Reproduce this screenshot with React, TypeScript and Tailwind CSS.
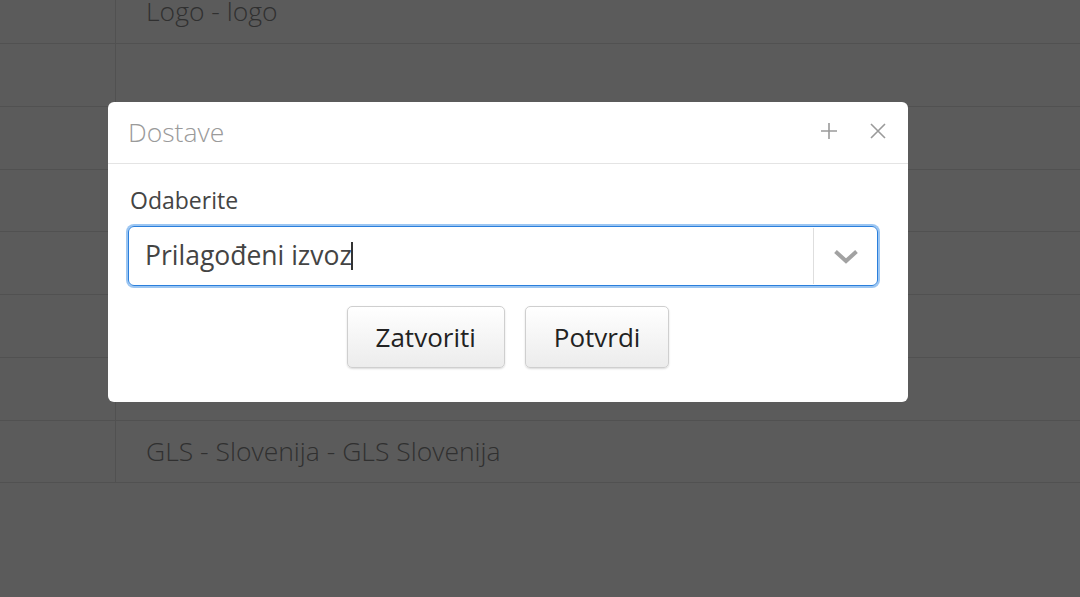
import React from "react";

const rows = ["Logo - logo", "", "", "", "", "", "", "GLS - Slovenija - GLS Slovenija"];

export default function App() {
  return (
    <div
      className="relative w-[1080px] h-[597px] overflow-hidden bg-white"
      style={{ fontFamily: '"Open Sans", "Noto Sans", sans-serif' }}
    >
      <div className="-mt-[18.7px]">
        {rows.map((r, i) => (
          <div key={i} className="flex h-[62.75px] border-b border-[#e2e2e2]">
            <div className="w-[116px] border-r border-[#e2e2e2]" />
            <div className="flex items-center pl-[30px] text-[26.5px] font-light text-[#888] whitespace-nowrap">{r}</div>
          </div>
        ))}
      </div>

      <div className="absolute inset-0 bg-black/[0.645]" />

      <div className="absolute left-[108px] top-[102px] w-[800px] h-[300px] rounded-[6px] bg-white flex flex-col">
        <div className="h-[62px] border-b border-[#e4e4e4] flex items-center pl-[20px] pr-[21px]">
          <span className="text-[26.5px] font-light text-[#9a9a9a] leading-none">Dostave</span>
          <div className="ml-auto flex items-center gap-[31px] -mt-[4px]">
            <svg width="18" height="18" viewBox="0 0 18 18" className="block">
              <path d="M9 1v16M1 9h16" stroke="#9a9a9a" strokeWidth="1.6" fill="none" />
            </svg>
            <svg width="18" height="18" viewBox="0 0 18 18" className="block">
              <path d="M2 2l14 14M16 2L2 16" stroke="#9a9a9a" strokeWidth="1.6" fill="none" />
            </svg>
          </div>
        </div>
        <div className="px-[20px] pt-[21px]">
          <div className="text-[23px] leading-[30px] text-[#444] pl-[2px]">Odaberite</div>
          <div className="mt-[11px] w-[750px] h-[60px] rounded-[6px] border border-[#2a7fdc] ring-[2px] ring-[#9cc6f2] flex items-stretch">
            <div className="flex-1 flex items-center pl-[16px] text-[26.5px] text-[#444]">
              <span>Prilagođeni izvoz</span>
              <span className="inline-block w-[2px] h-[28px] bg-[#333] -ml-[1px]" />
            </div>
            <div className="w-[64px] border-l border-[#dedede] my-[1px] flex items-center justify-center">
              <svg width="26" height="18" viewBox="0 0 26 18" className="block">
                <path d="M2.5 4.5l10.5 9.5 10.5-9.5" stroke="#a2a2a2" strokeWidth="4" fill="none" />
              </svg>
            </div>
          </div>
          <div className="mt-[20px] flex justify-center gap-[20px]">
            <button className="h-[62px] px-[28px] rounded-[5px] border border-[#cfcfcf] bg-gradient-to-b from-white to-[#ececec] shadow-[0_1px_2px_rgba(0,0,0,0.15)] text-[26px] text-[#222]">
              Zatvoriti
            </button>
            <button className="h-[62px] px-[28px] rounded-[5px] border border-[#cfcfcf] bg-gradient-to-b from-white to-[#ececec] shadow-[0_1px_2px_rgba(0,0,0,0.15)] text-[26px] text-[#222]">
              Potvrdi
            </button>
          </div>
        </div>
      </div>
    </div>
  );
}
